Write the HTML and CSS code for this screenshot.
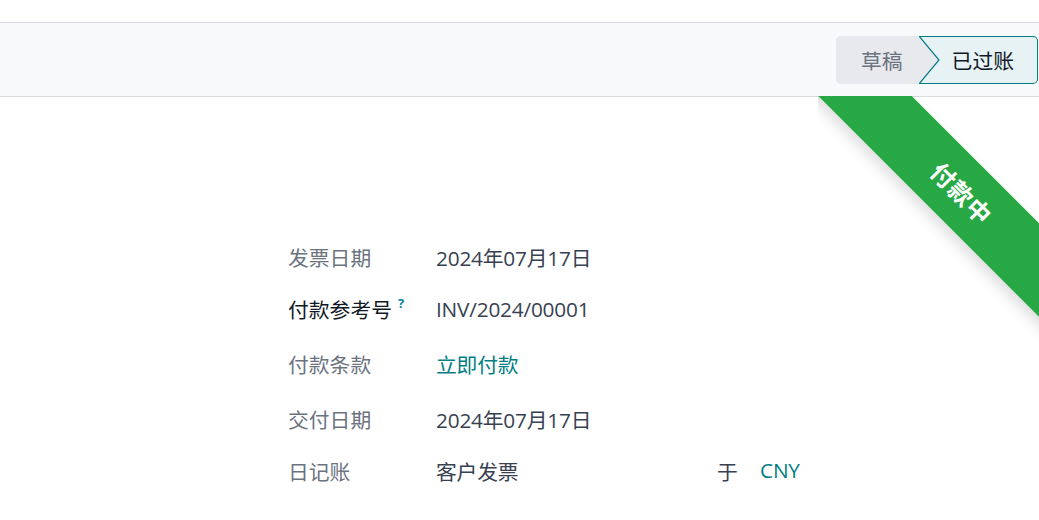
FILE: index.html
```html
<!DOCTYPE html>
<html lang="zh">

<head>
    <meta charset="UTF-8">
    <title>客户发票</title>
    <link rel="stylesheet" href="styles.css">
</head>

<body>
    <div class="top-space"></div>

    <div class="statusbar">
        <div class="status-steps">
            <div class="step step-draft">草稿</div>
            <div class="step step-active">
                <svg class="step-notch" width="21" height="48" viewBox="0 0 21 48">
                    <polygon points="0,0 20,24 0,48" fill="#e7e9ed" />
                    <polyline points="0,0 20,24 0,48" fill="none" stroke="#017e84" stroke-width="1.2" />
                </svg>
                <span class="step-label">已过账</span>
            </div>
        </div>
    </div>

    <div class="sheet">
        <div class="ribbon-box">
            <span class="ribbon">付款中</span>
        </div>

        <div class="form-group">
            <div class="label">发票日期</div>
            <div class="value">2024年07月17日</div>

            <div class="label label-strong">付款参考号<sup class="help">?</sup></div>
            <div class="value">INV/2024/00001</div>

            <div class="label">付款条款</div>
            <div class="value link">立即付款</div>

            <div class="label">交付日期</div>
            <div class="value">2024年07月17日</div>

            <div class="label">日记账</div>
            <div class="value journal">
                <span class="journal-name">客户发票</span>
                <span class="journal-in">于</span>
                <span class="link">CNY</span>
            </div>
        </div>
    </div>
</body>

</html>
```

FILE: styles.css
```css
* {
    box-sizing: border-box;
}

body,
html {
    margin: 0;
    padding: 0;
    overflow: hidden;
    height: 100vh;
    background-color: white;
    font-family: "Open Sans", "Noto Sans CJK SC", sans-serif;
    font-size: 20.8px;
    color: #374151;
}

.top-space {
    height: 22px;
}

.statusbar {
    display: flex;
    justify-content: flex-end;
    align-items: center;
    height: 75px;
    background-color: #f8f9fa;
    border-top: 1px solid #d8dadd;
    border-bottom: 1px solid #d8dadd;
}

.status-steps {
    display: flex;
    height: 48px;
    margin-right: 1px;
}

.step {
    display: flex;
    align-items: center;
    height: 48px;
}

.step-draft {
    padding: 0 16px 0 25px;
    background-color: #e7e9ed;
    color: #6b7280;
    border-radius: 5px 0 0 5px;
}

.step-active {
    position: relative;
    padding: 0 23px 0 33px;
    background-color: #e6f2f3;
    color: #111827;
    border: 1px solid #017e84;
    border-left: none;
    border-radius: 0 5px 5px 0;
}

/* chevron between the two steps */
.step-notch {
    position: absolute;
    left: 0;
    top: -1px;
}

.sheet {
    position: relative;
    margin-top: -1px;
    height: 430px;
    padding: 136px 0 0 288px;
}

.ribbon-box {
    position: absolute;
    top: 0;
    right: 0;
    width: 221px;
    height: 250px;
    overflow: hidden;
}

.ribbon {
    position: absolute;
    left: 144px;
    top: 97px;
    width: 420px;
    height: 66px;
    line-height: 66px;
    transform: translate(-50%, -50%) rotate(45deg);
    background-color: #28a745;
    color: white;
    font-family: "Noto Sans CJK SC", sans-serif;
    font-weight: bold;
    font-size: 24px;
    letter-spacing: 1px;
    text-align: center;
    box-shadow: 0 6px 14px rgba(0, 0, 0, 0.14);
}

.form-group {
    display: grid;
    grid-template-columns: 148px 1fr;
    grid-template-rows: 50px 54px 56px 54px 50px;
    align-items: center;
    letter-spacing: -0.2px;
}

.label {
    color: #6c737f;
    letter-spacing: 0;
}

.label-strong {
    color: #111827;
}

.help {
    color: #0180a5;
    font-size: 13px;
    font-weight: bold;
    margin-left: 6px;
    vertical-align: 10px;
}

.value {
    color: #374151;
}

.link {
    color: #017e84;
}

.journal {
    display: flex;
}

.journal-name {
    width: 281px;
}

.journal-in {
    width: 43px;
    color: #374151;
}
```
